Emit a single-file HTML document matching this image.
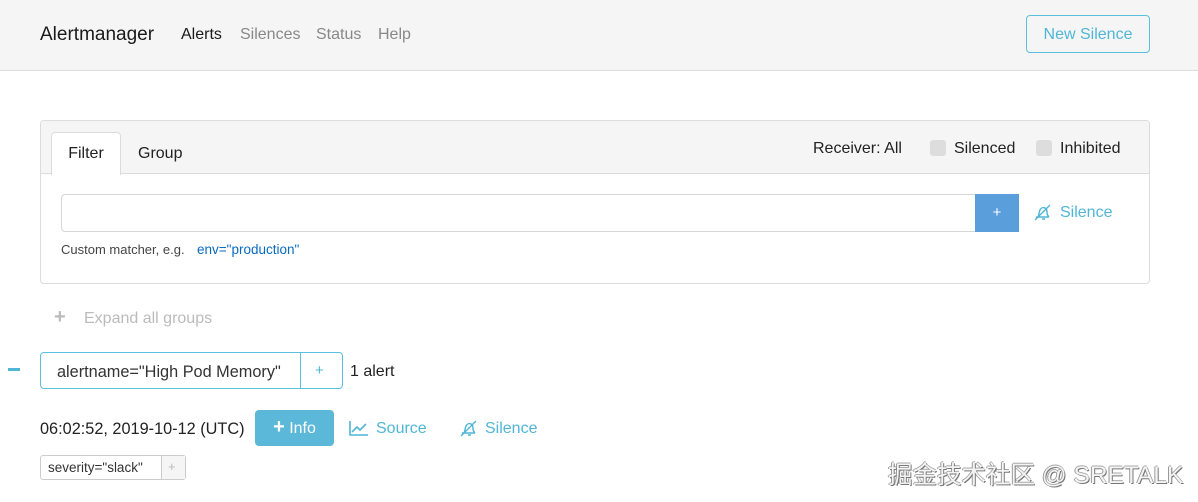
<!DOCTYPE html>
<html><head><meta charset="utf-8"><style>
*{margin:0;padding:0;box-sizing:border-box}
body{width:1198px;height:502px;background:#fff;font-family:"Liberation Sans",Arial,sans-serif;color:#222;position:relative;overflow:hidden}
.a{position:absolute;white-space:nowrap}
.teal{color:#4fb6d6}
</style></head><body>
<div class="a" style="left:0;top:0;width:1198px;height:71px;background:#f5f5f5;border-bottom:1px solid #ddd"></div>
<div class="a" style="left:40px;top:24px;font-size:19px;color:#1a1a1a">Alertmanager</div>
<div class="a" style="left:181px;top:26px;font-size:16px;color:#1a1a1a">Alerts</div>
<div class="a" style="left:240px;top:26px;font-size:16px;color:#888">Silences</div>
<div class="a" style="left:316px;top:26px;font-size:16px;color:#888">Status</div>
<div class="a" style="left:378px;top:26px;font-size:16px;color:#888">Help</div>
<div class="a teal" style="left:1026px;top:15px;width:124px;height:38px;border:1px solid #5bc0de;border-radius:4px;font-size:16px;line-height:37px;text-align:center">New Silence</div>

<div class="a" style="left:40px;top:120px;width:1110px;height:164px;border:1px solid #dcdcdc;border-radius:4px"></div>
<div class="a" style="left:41px;top:121px;width:1108px;height:53px;background:#f5f5f5;border-bottom:1px solid #dcdcdc;border-radius:4px 4px 0 0"></div>
<div class="a" style="left:51px;top:132px;width:70px;height:43px;background:#fff;border:1px solid #dcdcdc;border-bottom:none;border-radius:4px 4px 0 0;font-size:16px;line-height:42px;text-align:center">Filter</div>
<div class="a" style="left:138px;top:145px;font-size:16px">Group</div>
<div class="a" style="left:813px;top:140px;font-size:16px">Receiver: All</div>
<div class="a" style="left:930px;top:140px;width:16px;height:16px;background:#ddd;border-radius:3px"></div>
<div class="a" style="left:954px;top:140px;font-size:16px">Silenced</div>
<div class="a" style="left:1036px;top:140px;width:16px;height:16px;background:#ddd;border-radius:3px"></div>
<div class="a" style="left:1060px;top:140px;font-size:16px">Inhibited</div>
<div class="a" style="left:61px;top:194px;width:915px;height:38px;border:1px solid #d6d6d6;border-radius:4px 0 0 4px"></div>
<div class="a" style="left:975px;top:194px;width:44px;height:38px;background:#5a9fdc;color:#fff;font-size:15px;line-height:38px;text-align:center">+</div>
<svg class="a" style="left:1033px;top:203px" width="20" height="18" viewBox="0 0 20 18" fill="none" stroke="#4fb6d6" stroke-width="1.4"><path d="M3 14h13M5 14c1-2 1-5 2-7s3-3 5-2c2 1 2 3 2 5s1 3 2 4M9 16h3M2 17L17 2"/></svg>
<div class="a teal" style="left:1060px;top:204px;font-size:16px">Silence</div>
<div class="a" style="left:61px;top:242px;font-size:13px;color:#444">Custom matcher, e.g.</div>
<div class="a" style="left:197px;top:242px;font-size:13.5px;color:#0a6ac0">env="production"</div>

<div class="a" style="left:54px;top:306px;font-size:20px;font-weight:bold;color:#bbb">+</div>
<div class="a" style="left:84px;top:310px;font-size:16px;color:#bbb">Expand all groups</div>

<div class="a" style="left:8px;top:368px;width:12px;height:3px;background:#4fb6d6"></div>
<div class="a" style="left:40px;top:352px;width:303px;height:37px;border:1px solid #5bc0de;border-radius:4px"></div>
<div class="a" style="left:300px;top:352px;width:1px;height:37px;background:#5bc0de"></div>
<div class="a" style="left:57px;top:363px;font-size:16.3px;color:#333">alertname="High Pod Memory"</div>
<div class="a teal" style="left:315px;top:362px;font-size:15px">+</div>
<div class="a" style="left:350px;top:363px;font-size:16px">1 alert</div>

<div class="a" style="left:40px;top:420px;font-size:16.3px">06:02:52, 2019-10-12 (UTC)</div>
<div class="a" style="left:255px;top:410px;width:79px;height:36px;background:#5bb8d8;border-radius:4px;color:#fff;font-size:16px;line-height:34px;text-align:center"><b style="font-size:20px">+</b> Info</div>
<svg class="a" style="left:349px;top:420px" width="20" height="16" viewBox="0 0 20 16" fill="none" stroke="#4fb6d6" stroke-width="1.6"><path d="M1 1v14h18M3 12l5-5 3 3 6-6"/></svg>
<div class="a teal" style="left:376px;top:420px;font-size:16px">Source</div>
<svg class="a" style="left:459px;top:419px" width="20" height="18" viewBox="0 0 20 18" fill="none" stroke="#4fb6d6" stroke-width="1.4"><path d="M3 14h13M5 14c1-2 1-5 2-7s3-3 5-2c2 1 2 3 2 5s1 3 2 4M9 16h3M2 17L17 2"/></svg>
<div class="a teal" style="left:485px;top:420px;font-size:16px">Silence</div>

<div class="a" style="left:40px;top:455px;width:146px;height:25px;border:1px solid #ccc;border-radius:3px"></div>
<div class="a" style="left:161px;top:456px;width:24px;height:23px;background:#f5f5f5;border-left:1px solid #ccc"></div>
<div class="a" style="left:48px;top:460px;font-size:13.5px;color:#333">severity="slack"</div>
<div class="a" style="left:168px;top:459px;font-size:13px;color:#bbb">+</div>

<div class="a" style="left:888px;top:456px;font-size:24.5px;color:#f4f4f4;font-family:'Liberation Sans','Noto Sans CJK SC',sans-serif;text-shadow:1px 1px 0 #777,-1px 0 0 #999,0 -1px 0 #aaa">掘金技术社区 @ SRETALK</div>
</body></html>
